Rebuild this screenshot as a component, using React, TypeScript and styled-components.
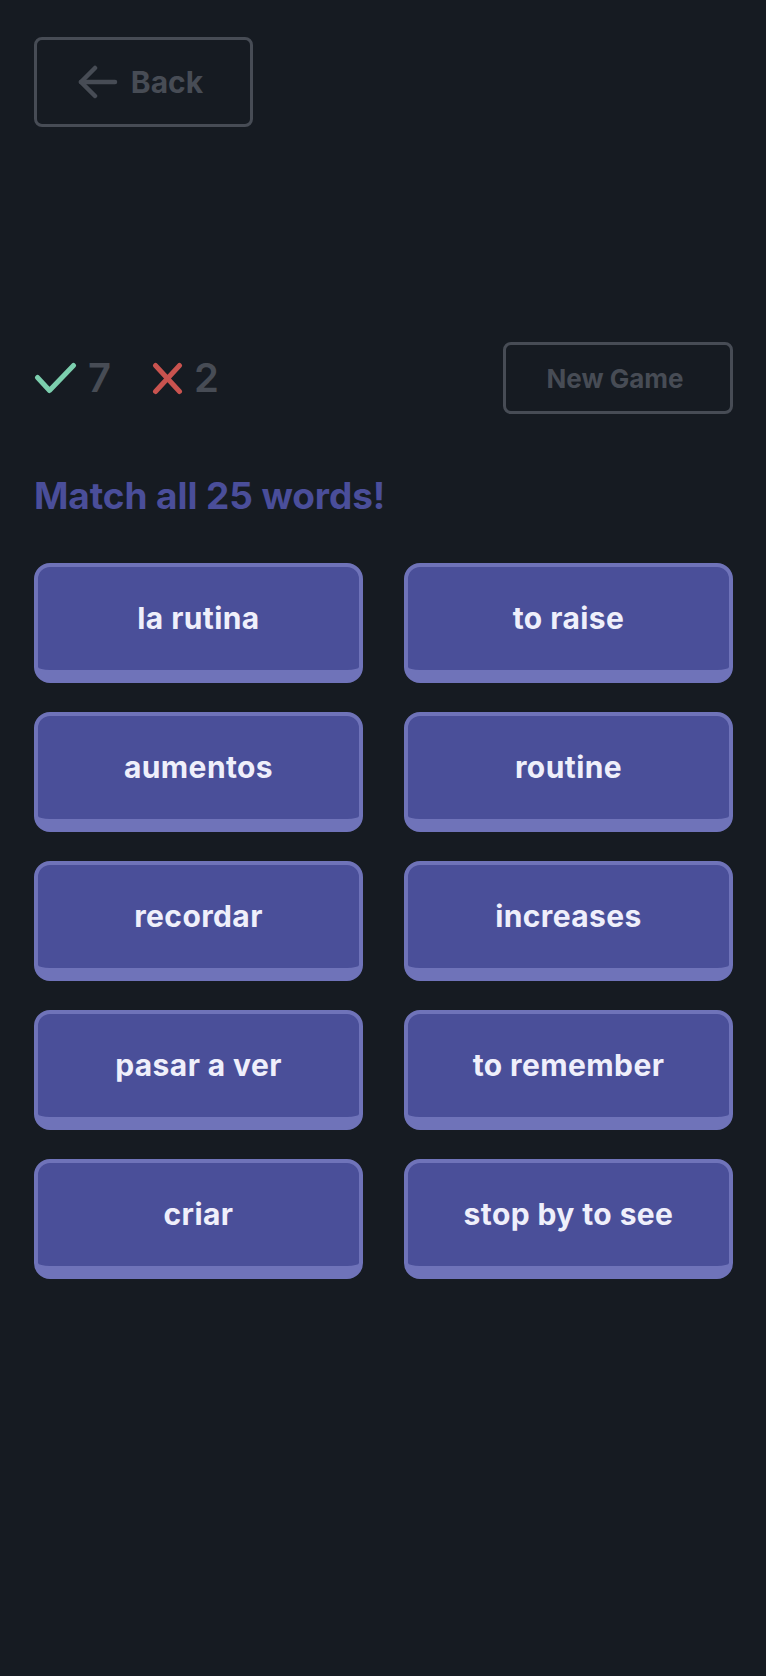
import React from "react";
import styled, { createGlobalStyle } from "styled-components";

const GlobalStyle = createGlobalStyle`
  html, body {
    margin: 0;
    padding: 0;
    background: #161b22;
  }
  body {
    font-family: "Inter", "Noto Sans", sans-serif;
  }
  * { box-sizing: border-box; }
`;

const Page = styled.div`
  min-height: 1676px;
  background: #161b22;
  padding: 37px 33px 0 34px;
  display: flex;
  flex-direction: column;
`;

const GhostButton = styled.button<{ $w: number; $h: number; $size: number }>`
  width: ${(p) => p.$w}px;
  height: ${(p) => p.$h}px;
  background: transparent;
  border: 3px solid #474c55;
  border-radius: 8px;
  color: #474c55;
  font-family: "Inter", sans-serif;
  font-weight: 700;
  font-size: ${(p) => p.$size}px;
  display: flex;
  align-items: center;
  justify-content: center;
  gap: 13px;
  padding: 0 6px 0 0;
  cursor: pointer;
`;

const TopBar = styled.div`
  display: flex;
`;

const ScoreRow = styled.div`
  margin-top: 215px;
  display: flex;
  justify-content: space-between;
  align-items: center;
`;

const Scores = styled.div`
  display: flex;
  align-items: center;
  gap: 41px;
`;

const Score = styled.div`
  display: flex;
  align-items: center;
  gap: 11px;
`;

const Count = styled.span`
  font-family: "Inter", sans-serif;
  font-weight: 600;
  font-size: 40px;
  line-height: 1;
  color: #474c55;
`;

const Title = styled.h1`
  margin: 60px 0 0;
  font-family: "Inter", sans-serif;
  font-weight: 700;
  font-size: 37px;
  line-height: 44px;
  letter-spacing: -0.1px;
  color: #4a4e9a;
`;

const Grid = styled.div`
  margin-top: 45px;
  display: grid;
  grid-template-columns: 1fr 1fr;
  column-gap: 41px;
  row-gap: 29px;
`;

const Card = styled.button`
  height: 120px;
  background: #4a4f99;
  border: 4px solid #6f73b9;
  border-bottom-width: 13px;
  border-radius: 16px;
  color: #efeffb;
  font-family: "Inter", sans-serif;
  font-weight: 700;
  font-size: 30px;
  letter-spacing: 0.4px;
  display: flex;
  align-items: center;
  justify-content: center;
  padding: 0 0 2px;
  cursor: pointer;
`;

const ArrowLeft = () => (
  <svg width="40" height="34" viewBox="0 0 40 34" fill="none" stroke="#474c55" strokeWidth="4.5" strokeLinecap="round" strokeLinejoin="round">
    <path d="M3 17H37" />
    <path d="M17 3L3 17L17 31" />
  </svg>
);

const CheckIcon = () => (
  <svg width="43" height="32" viewBox="0 0 43 32" fill="none" stroke="#7ccfae" strokeWidth="5" strokeLinecap="round" strokeLinejoin="round">
    <path d="M3.5 15.5L15.5 28.5L39.5 3.5" />
  </svg>
);

const XIcon = () => (
  <svg width="31" height="33" viewBox="0 0 31 33" fill="none" stroke="#c9534f" strokeWidth="5" strokeLinecap="round">
    <path d="M3.5 3.5L27.5 29.5" />
    <path d="M27.5 3.5L3.5 29.5" />
  </svg>
);

const words = [
  "la rutina",
  "to raise",
  "aumentos",
  "routine",
  "recordar",
  "increases",
  "pasar a ver",
  "to remember",
  "criar",
  "stop by to see",
];

export default function App() {
  return (
    <>
      <GlobalStyle />
      <Page>
        <TopBar>
          <GhostButton $w={219} $h={90} $size={30}>
            <ArrowLeft />
            Back
          </GhostButton>
        </TopBar>
        <ScoreRow>
          <Scores>
            <Score>
              <CheckIcon />
              <Count>7</Count>
            </Score>
            <Score>
              <XIcon />
              <Count>2</Count>
            </Score>
          </Scores>
          <GhostButton $w={230} $h={72} $size={26}>
            New Game
          </GhostButton>
        </ScoreRow>
        <Title>Match all 25 words!</Title>
        <Grid>
          {words.map((w) => (
            <Card key={w}>{w}</Card>
          ))}
        </Grid>
      </Page>
    </>
  );
}
